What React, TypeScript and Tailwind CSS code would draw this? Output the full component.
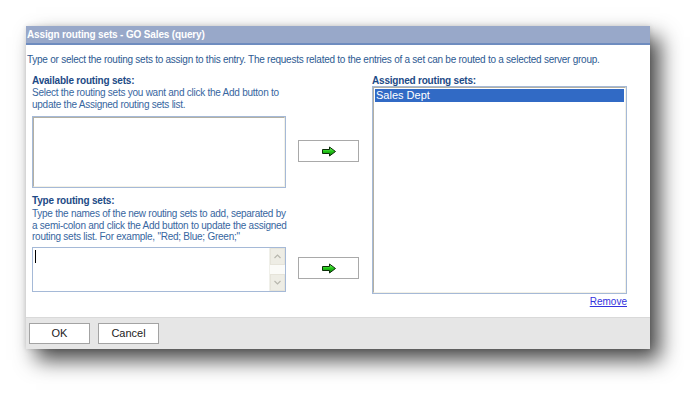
import React from "react";

function GreenArrow() {
  return (
    <svg width="16" height="11" viewBox="0 0 16 11">
      <defs>
        <linearGradient id="ga" x1="0" y1="0" x2="0" y2="1">
          <stop offset="0" stopColor="#7dff6a" />
          <stop offset="0.5" stopColor="#22c418" />
          <stop offset="1" stopColor="#0b7a06" />
        </linearGradient>
      </defs>
      <path d="M1.5 3.5 H8.5 V1 L14.5 5.5 L8.5 10 V7.5 H1.5 Z" fill="url(#ga)" stroke="#0b2e08" strokeWidth="1" strokeLinejoin="miter" />
    </svg>
  );
}

function ArrowButton() {
  return (
    <div className="w-[61px] h-[22px] border border-[#a9a9a9] bg-white flex items-center justify-center">
      <GreenArrow />
    </div>
  );
}

export default function App() {
  const font = { fontFamily: '"Liberation Sans", Arial, sans-serif' };
  return (
    <div className="w-[696px] h-[395px] bg-white overflow-hidden pt-[26px] pl-[26px]" style={font}>
      <div className="w-[624px] h-[323px] bg-white flex flex-col shadow-[10px_11px_20px_rgba(0,0,0,0.72),0_0_5px_rgba(0,0,0,0.12)]">
        <div className="h-[19px] shrink-0 bg-[#98a8c9] border-b-2 border-[#6e8cbf] text-white font-bold text-[10px] leading-[17px] pl-[1px] tracking-[-0.15px] whitespace-nowrap">
          Assign routing sets - GO Sales (query)
        </div>
        <div className="flex-1 flex flex-col overflow-hidden">
          <div className="text-[10px] leading-[12px] text-[#2d5a92] pl-[1px] mt-[9px] tracking-[-0.25px] whitespace-nowrap">
            Type or select the routing sets to assign to this entry. The requests related to the entries of a set can be routed to a selected server group.
          </div>
          <div className="flex pl-[6px] mt-[9px]">
            <div className="w-[254px] flex flex-col">
              <div className="text-[10px] leading-[11px] font-bold text-[#1d4a86] tracking-[-0.2px]">Available routing sets:</div>
              <div className="text-[10px] leading-[11.5px] text-[#3766a0] mt-[1px] tracking-[-0.25px] whitespace-nowrap">
                Select the routing sets you want and click the Add button to<br />update the Assigned routing sets list.
              </div>
              <div className="mt-[6px] h-[72px] border border-[#a5b9d7] bg-white">
                <div className="h-full border-t border-l border-[#b3b0a3] border-r border-b border-r-[#f3f1e6] border-b-[#f3f1e6]" />
              </div>
              <div className="text-[10px] leading-[11px] font-bold text-[#1d4a86] mt-[7px] tracking-[-0.2px]">Type routing sets:</div>
              <div className="text-[10px] leading-[11.5px] text-[#3766a0] mt-[2px] tracking-[-0.25px] whitespace-nowrap">
                Type the names of the new routing sets to add, separated by<br />a semi-colon and click the Add button to update the assigned<br />routing sets list. For example, "Red; Blue; Green;"
              </div>
              <div className="mt-[4px] h-[45px] border border-[#a5b9d7] bg-white flex">
                <div className="flex-1 pl-[2px] pt-[2px]">
                  <div className="w-[1px] h-[13px] bg-black" />
                </div>
                <div className="w-[16px] flex flex-col justify-between bg-[#fbfbf8] border-l border-[#f0f0ea]">
                  <div className="h-[17px] bg-[#eeede5] border border-[#e6e4da] flex items-center justify-center">
                    <svg width="7" height="5" viewBox="0 0 7 5"><path d="M0.5 4 L3.5 1 L6.5 4" fill="none" stroke="#b8b7ae" strokeWidth="1.2" /></svg>
                  </div>
                  <div className="h-[17px] bg-[#eeede5] border border-[#e6e4da] flex items-center justify-center">
                    <svg width="7" height="5" viewBox="0 0 7 5"><path d="M0.5 1 L3.5 4 L6.5 1" fill="none" stroke="#b8b7ae" strokeWidth="1.2" /></svg>
                  </div>
                </div>
              </div>
            </div>
            <div className="w-[61px] ml-[12px] flex flex-col">
              <div className="mt-[65px]"><ArrowButton /></div>
              <div className="mt-[95px]"><ArrowButton /></div>
            </div>
            <div className="w-[255px] ml-[13px] flex flex-col">
              <div className="text-[10px] leading-[11px] font-bold text-[#1d4a86] tracking-[-0.2px]">Assigned routing sets:</div>
              <div className="h-[208px] border border-[#a5b9d7] bg-white">
                <div className="h-full border-t border-l border-[#b3b0a3] border-r border-b border-r-[#f3f1e6] border-b-[#f3f1e6] p-[1px]">
                  <div className="h-[13px] bg-[#316ac5] text-white text-[11px] leading-[13px] pl-[1px]">Sales Dept</div>
                </div>
              </div>
              <div className="flex justify-end mt-[2px]">
                <span className="text-[10px] leading-[12px] text-[#3333dd] underline">Remove</span>
              </div>
            </div>
          </div>
        </div>
        <div className="h-[32px] shrink-0 bg-[#e6e6e6] border-t border-[#d9d9d9] flex items-start pt-[5px] pl-[3px] gap-[8px]">
          <div className="w-[61px] h-[21px] border border-[#a3a3a3] bg-white text-[11px] leading-[19px] text-center text-[#222]">OK</div>
          <div className="w-[61px] h-[21px] border border-[#a3a3a3] bg-white text-[11px] leading-[19px] text-center text-[#222]">Cancel</div>
        </div>
      </div>
    </div>
  );
}
